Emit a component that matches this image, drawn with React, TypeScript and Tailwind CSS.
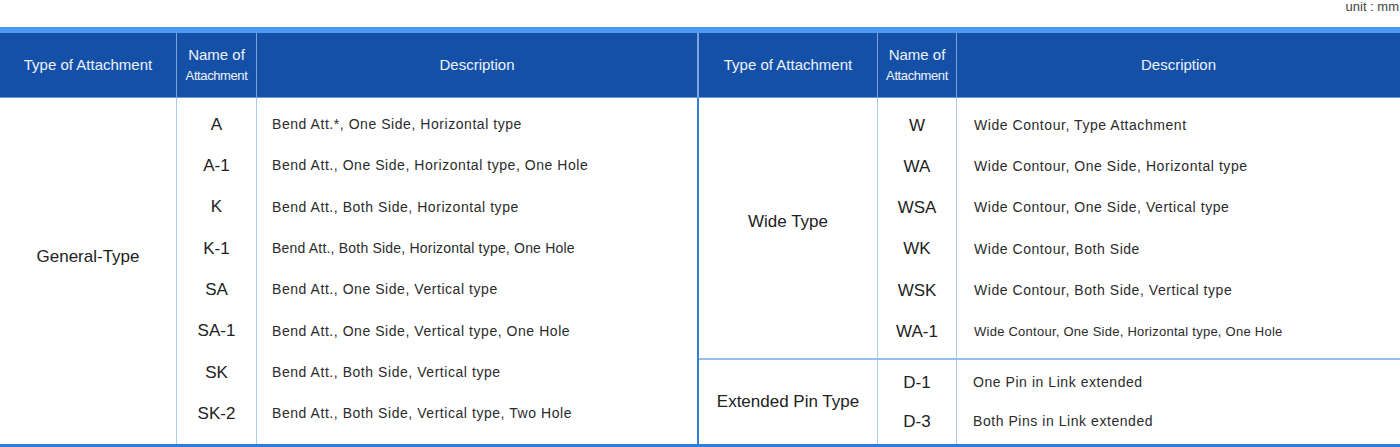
import React from "react";

interface Row {
  name: string;
  desc: string;
  size?: string;
}

const leftRows: Row[] = [
  { name: "A", desc: "Bend Att.*, One Side, Horizontal type" },
  { name: "A-1", desc: "Bend Att., One Side, Horizontal type, One Hole" },
  { name: "K", desc: "Bend Att., Both Side, Horizontal type" },
  { name: "K-1", desc: "Bend Att., Both Side, Horizontal type, One Hole", size: "text-[14px] tracking-[0.2px]" },
  { name: "SA", desc: "Bend Att., One Side, Vertical type" },
  { name: "SA-1", desc: "Bend Att., One Side, Vertical type, One Hole" },
  { name: "SK", desc: "Bend Att., Both Side, Vertical type" },
  { name: "SK-2", desc: "Bend Att., Both Side, Vertical type, Two Hole" },
];

const wideRows: Row[] = [
  { name: "W", desc: "Wide Contour, Type Attachment" },
  { name: "WA", desc: "Wide Contour, One Side, Horizontal type" },
  { name: "WSA", desc: "Wide Contour, One Side, Vertical type" },
  { name: "WK", desc: "Wide Contour, Both Side" },
  { name: "WSK", desc: "Wide Contour, Both Side, Vertical type" },
  { name: "WA-1", desc: "Wide Contour, One Side, Horizontal type, One Hole", size: "text-[13px] tracking-[0.25px]" },
];

const pinRows: Row[] = [
  { name: "D-1", desc: "One Pin in Link extended" },
  { name: "D-3", desc: "Both Pins in Link extended" },
];

function Header({ typeW, nameW }: { typeW: string; nameW: string }) {
  return (
    <div className="flex h-[65px] bg-[#1550a8] text-[#eef3fb] border-b border-[#6f9bd8]">
      <div className={`${typeW} flex items-center justify-center text-[15px] border-r border-[#7ba3da]`}>
        Type of Attachment
      </div>
      <div className={`${nameW} flex flex-col items-center justify-center border-r border-[#7ba3da]`}>
        <span className="text-[15px] leading-[21px]">Name of</span>
        <span className="text-[13px] leading-[21px] tracking-[-0.4px]">Attachment</span>
      </div>
      <div className="flex-1 flex items-center justify-center text-[15px]">Description</div>
    </div>
  );
}

function Rows({ rows, nameW, rowH, pt, descPl }: { rows: Row[]; nameW: string; rowH: string; pt: string; descPl: string }) {
  return (
    <>
      <div className={`${nameW} ${pt} border-r border-[#a9cbf2]`}>
        {rows.map((r) => (
          <div key={r.name} className={`${rowH} flex items-center justify-center text-[17px] text-[#222]`}>
            {r.name}
          </div>
        ))}
      </div>
      <div className={`flex-1 ${pt} ${descPl}`}>
        {rows.map((r) => (
          <div
            key={r.name}
            className={`${rowH} flex items-center text-[#2b2b2b] ${r.size ?? "text-[14px] tracking-[0.55px]"}`}
          >
            {r.desc}
          </div>
        ))}
      </div>
    </>
  );
}

export default function App() {
  return (
    <div className="w-[1400px] h-[447px] bg-white overflow-hidden" style={{ fontFamily: '"Liberation Sans", Arial, sans-serif' }}>
      <div className="h-[27px] flex justify-end items-start text-[13px] text-[#444] leading-[14px]">
        <span className="pr-[1px]">unit : mm</span>
      </div>
      <div className="h-[6px] bg-[#4b9cf0]" />
      <div className="flex h-[411px]">
        {/* left table */}
        <div className="w-[697px] flex flex-col">
          <Header typeW="w-[177px]" nameW="w-[80px]" />
          <div className="flex flex-1">
            <div className="w-[177px] border-r border-[#a9cbf2] flex items-center justify-center pb-[29px] text-[17px] text-[#222]">
              General-Type
            </div>
            <Rows rows={leftRows} nameW="w-[80px]" rowH="h-[41.3px]" pt="pt-[6px]" descPl="pl-[15px]" />
          </div>
        </div>
        <div className="w-[2px] flex flex-col">
          <div className="h-[65px] bg-[#7ba3da]" />
          <div className="flex-1 bg-[#2d7fd9]" />
        </div>
        {/* right table */}
        <div className="flex-1 flex flex-col">
          <Header typeW="w-[179px]" nameW="w-[79px]" />
          <div className="h-[262px] flex border-b-2 border-[#94c0f0]">
            <div className="w-[179px] border-r border-[#a9cbf2] flex items-center justify-center pb-[13px] text-[17px] text-[#222]">
              Wide Type
            </div>
            <Rows rows={wideRows} nameW="w-[79px]" rowH="h-[41.2px]" pt="pt-[7px]" descPl="pl-[17px]" />
          </div>
          <div className="flex flex-1">
            <div className="w-[179px] border-r border-[#a9cbf2] flex items-center justify-center text-[17px] text-[#222]">
              Extended Pin Type
            </div>
            <Rows rows={pinRows} nameW="w-[79px]" rowH="h-[39px]" pt="pt-[3px]" descPl="pl-[16px]" />
          </div>
        </div>
      </div>
      <div className="h-[3px] bg-[#2d7fd9]" />
    </div>
  );
}
